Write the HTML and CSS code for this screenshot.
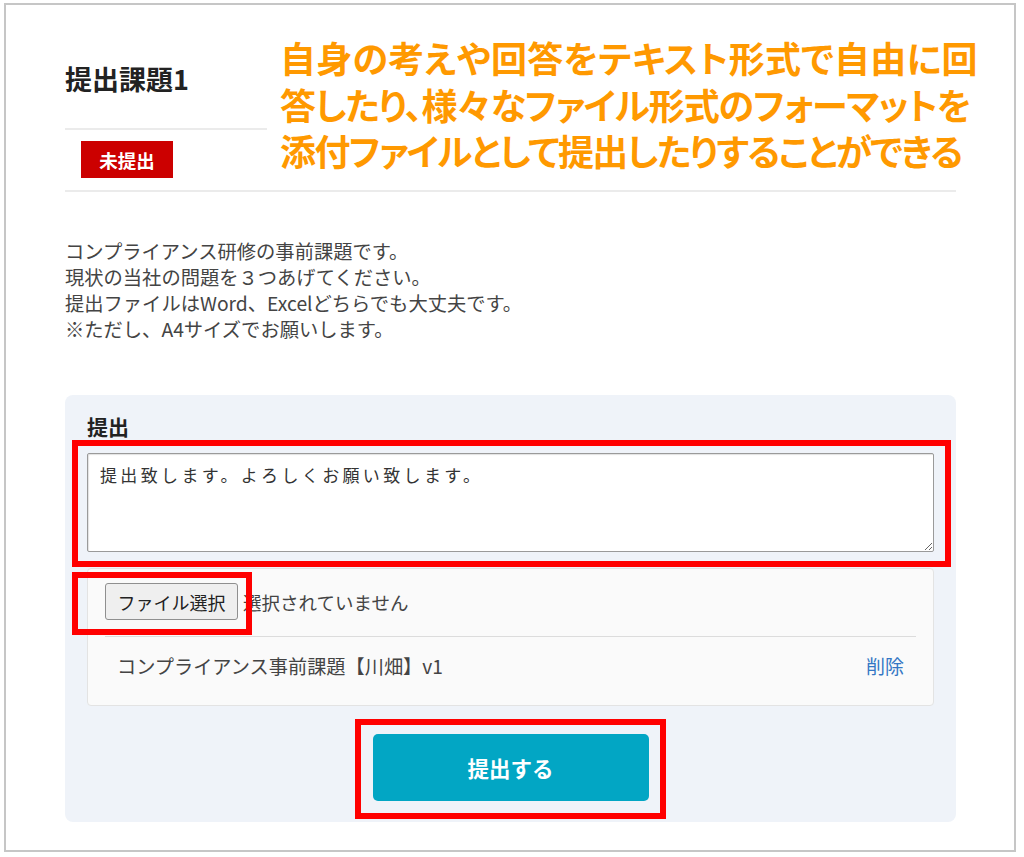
FILE: index.html
```html
<!DOCTYPE html>
<html lang="ja">
<head>
<meta charset="utf-8">
<title>提出課題1</title>
<link rel="stylesheet" href="styles.css">
</head>
<body>
<div class="frame">
  <header class="header">
    <div class="header-left">
      <h1 class="title">提出課題1</h1>
      <span class="badge">未提出</span>
    </div>
    <p class="note"><span class="note-line l1">自身の考えや回答をテキスト形式で自由に回</span><span class="note-line l2">答したり、様々なファイル形式のフォーマットを</span><span class="note-line l3">添付ファイルとして提出したりすることができる</span></p>
  </header>

  <div class="desc">
    <p>コンプライアンス研修の事前課題です。</p>
    <p>現状の当社の問題を３つあげてください。</p>
    <p>提出ファイルはWord、Excelどちらでも大丈夫です。</p>
    <p>※ただし、A4サイズでお願いします。</p>
  </div>

  <section class="panel">
    <h2 class="panel-label">提出</h2>
    <div class="text-wrap">
      <textarea class="answer">提出致します。よろしくお願い致します。</textarea>
      <span class="mark mark-text"></span>
    </div>
    <div class="file-card">
      <div class="file-pick">
        <span class="pick-wrap">
          <button class="pick-btn" type="button">ファイル選択</button>
          <span class="mark mark-pick"></span>
        </span>
        <span class="pick-status">選択されていません</span>
      </div>
      <div class="file-item">
        <span class="file-name">コンプライアンス事前課題【川畑】v1</span>
        <a class="file-del" href="#">削除</a>
      </div>
    </div>
    <div class="submit-wrap">
      <button class="submit-btn" type="button">提出する</button>
      <span class="mark mark-submit"></span>
    </div>
  </section>
</div>
</body>
</html>
```
FILE: styles.css
```css
* { box-sizing: border-box; }
html, body { margin: 0; padding: 0; background: #ffffff; }
body {
  font-family: "Noto Sans CJK JP", "Noto Sans", sans-serif;
  color: #444;
}
.frame {
  margin: 3px 0 0 4px;
  width: 1012px;
  height: 849px;
  border: 2px solid #c6c6c6;
  padding: 0 58px 0 59px;
}
.header {
  display: flex;
  padding-top: 29px;
  border-bottom: 2px solid #ebebeb;
}
.header-left {
  width: 202px;
  flex: none;
}
.title {
  margin: 27px 0 0;
  padding-bottom: 32px;
  border-bottom: 2px solid #ebebeb;
  font-size: 27px;
  line-height: 35px;
  font-weight: 700;
  color: #222;
}
.badge {
  display: flex;
  align-items: center;
  justify-content: center;
  width: 92px;
  height: 37px;
  margin: 11px 0 12px 16px;
  background: #cc0000;
  color: #fff;
  font-size: 18.5px;
  font-weight: 700;
}
.note {
  flex: none;
  margin: 0 0 0 13px;
  font-size: 36px;
  font-weight: 700;
  color: #ff9900;
  white-space: nowrap;
  font-feature-settings: "palt";
}
.note-line {
  display: block;
  height: 46.5px;
  line-height: 46.5px;
}
.l1 { letter-spacing: 0.25px; }
.l2 { letter-spacing: -1.1px; }
.l3 { letter-spacing: -1.6px; }
.desc {
  margin-top: 46px;
  font-size: 19.3px;
  line-height: 26px;
  color: #444;
}
.desc p { margin: 0; }
.panel {
  margin-top: 53px;
  background: #eff3f9;
  border-radius: 8px;
  padding: 18px 22px 21px;
}
.panel-label {
  margin: 0 0 13px;
  font-size: 21px;
  line-height: 27px;
  font-weight: 700;
  color: #222;
}
.text-wrap { position: relative; }
.answer {
  display: block;
  width: 100%;
  height: 99px;
  border: 1px solid #9a9a9a;
  border-radius: 2px;
  box-shadow: inset 1px 1px 1px rgba(0,0,0,0.12);
  padding: 9px 12px;
  font-family: "Noto Sans CJK JP", sans-serif;
  font-size: 17px;
  line-height: 24px;
  letter-spacing: 3.35px;
  color: #333;
  background: #fff;
}
.mark {
  position: absolute;
  border: 6px solid #ff0000;
  pointer-events: none;
}
.mark-text { left: -15px; top: -13px; right: -17px; bottom: -15px; }
.file-card {
  margin-top: 16px;
  background: #fafafa;
  border: 1px solid #e3e3e3;
  border-radius: 4px;
  padding: 14px 17px 0;
}
.file-pick {
  display: flex;
  align-items: center;
  padding-bottom: 16px;
  border-bottom: 1px solid #dcdcdc;
}
.pick-wrap { position: relative; display: block; }
.pick-btn {
  display: block;
  height: 37px;
  width: 133px;
  padding: 0;
  background: #efefef;
  border: 1px solid #8f8f8f;
  border-radius: 3px;
  font-family: "Noto Sans CJK JP", sans-serif;
  font-size: 18px;
  color: #222;
}
.mark-pick { left: -33px; top: -11px; right: -14px; bottom: -15px; }
.pick-status {
  margin-left: 5px;
  font-size: 18.5px;
  color: #444;
}
.file-item {
  display: flex;
  justify-content: space-between;
  align-items: center;
  padding: 16px 12px 26px;
  font-size: 19.2px;
  line-height: 26px;
}
.file-name { color: #444; }
.file-del { color: #3477c4; text-decoration: none; font-size: 19px; }
.submit-wrap {
  position: relative;
  width: 276px;
  margin: 28px auto 0;
}
.submit-btn {
  display: block;
  width: 276px;
  height: 67px;
  border: none;
  border-radius: 5px;
  background: #02a6c4;
  color: #fff;
  font-family: "Noto Sans CJK JP", sans-serif;
  font-size: 21.5px;
  font-weight: 700;
}
.mark-submit { left: -18px; top: -15px; right: -17px; bottom: -18px; }
```
